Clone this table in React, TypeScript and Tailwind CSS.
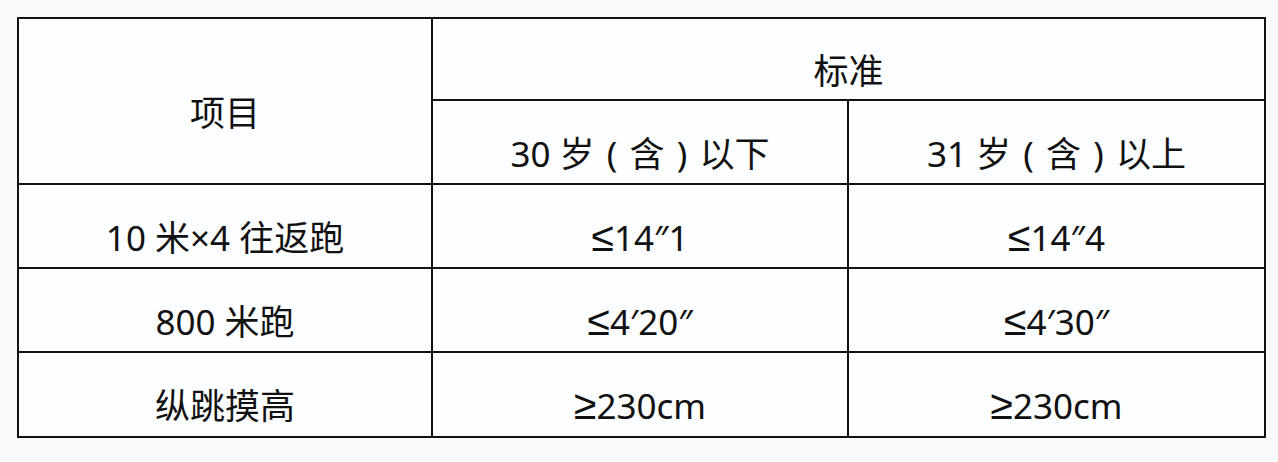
import React from "react";

const cell =
  "bg-[#fdfeff] flex items-center justify-center pt-[22px] leading-none text-[35px] text-[#111] whitespace-pre";

function Sym({ c }: { c: string }) {
  return (
    <span className="text-[41px] leading-none" style={{ fontFamily: "'Liberation Sans', 'DejaVu Sans', sans-serif" }}>
      {c}
    </span>
  );
}

function Paren({ c }: { c: string }) {
  return <span className="inline-block w-[35px] text-center">{c}</span>;
}

function AgeHead({ n, tail }: { n: string; tail: string }) {
  return (
    <span>
      {n} 岁<Paren c="(" />含<Paren c=")" />
      {tail}
    </span>
  );
}

export default function App() {
  const rows: [React.ReactNode, React.ReactNode, React.ReactNode, string][] = [
    ["10 米×4 往返跑", <><Sym c="≤" />14″1</>, <><Sym c="≤" />14″4</>, "a"],
    ["800 米跑", <><Sym c="≤" />4′20″</>, <><Sym c="≤" />4′30″</>, "b"],
    ["纵跳摸高", <><Sym c="≥" />230cm</>, <><Sym c="≥" />230cm</>, "c"],
  ];
  return (
    <div
      className="w-[1278px] h-[462px] bg-[#f8f9fb] pt-[17px] pl-[17px]"
      style={{ fontFamily: "'Noto Sans', 'Noto Sans CJK SC', sans-serif" }}
    >
      <div className="w-[1249px] h-[421px] bg-[#111] p-[2px] grid grid-cols-[412px_414px_415px] grid-rows-[80px_82px_82px_82px_83px] gap-[2px]">
        <div className={`${cell} row-span-2`}>项目</div>
        <div className={`${cell} col-span-2`}>标准</div>
        <div className={cell}>
          <AgeHead n="30" tail="以下" />
        </div>
        <div className={cell}>
          <AgeHead n="31" tail="以上" />
        </div>
        {rows.map((r) => (
          <React.Fragment key={r[3]}>
            <div className={cell}>{r[0]}</div>
            <div className={cell}>{r[1]}</div>
            <div className={cell}>{r[2]}</div>
          </React.Fragment>
        ))}
      </div>
    </div>
  );
}
